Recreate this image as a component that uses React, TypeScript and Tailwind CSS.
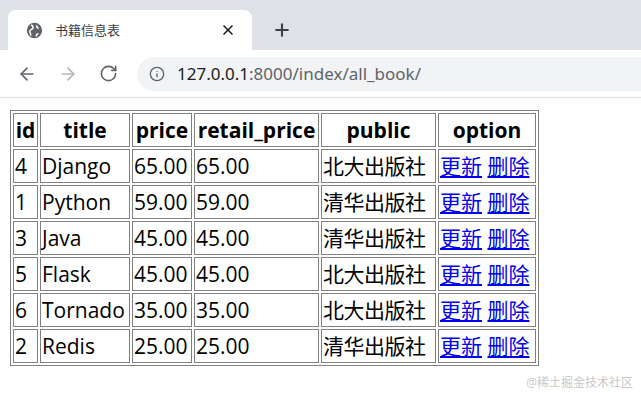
import { ArrowLeft, ArrowRight, RotateCw, Info, X, Plus } from 'lucide-react'

const rows = [
  ['4', 'Django', '65.00', '65.00', '北大出版社'],
  ['1', 'Python', '59.00', '59.00', '清华出版社'],
  ['3', 'Java', '45.00', '45.00', '清华出版社'],
  ['5', 'Flask', '45.00', '45.00', '北大出版社'],
  ['6', 'Tornado', '35.00', '35.00', '北大出版社'],
  ['2', 'Redis', '25.00', '25.00', '清华出版社'],
]

const widths = ['w-[25px]', 'w-[90px]', 'w-[60px]', 'w-[125px]', 'w-[115px]', 'w-[98px]']

export default function App() {
  const cell = 'border border-[#808080] px-[1px] h-[34px] text-[21px] leading-none whitespace-nowrap overflow-hidden'
  return (
    <div className="w-[641px] h-[400px] bg-white relative overflow-hidden" style={{ fontFamily: '"Open Sans", "Noto Sans CJK SC", sans-serif' }}>
      {/* tab strip */}
      <div className="h-[50px] bg-[#dee1e6] flex items-end pl-2">
        <div className="w-[244px] h-[40px] bg-white rounded-t-lg flex items-center pl-[18px] pr-4 gap-[12px]">
          <svg width="17" height="17" viewBox="0 0 20 20">
            <circle cx="10" cy="10" r="9" fill="#5f6368" />
            <path d="M6 3.5c2 1 3 2.5 2 4s-3 1-3.5 3 1.5 3 1 5.5M13 4c-1 1.5 0 3 2 3.5M12 17c0-2 1-3 2.5-3.5" stroke="white" strokeWidth="1.8" fill="none" />
          </svg>
          <span className="text-[13px] text-[#3c4043] flex-1" style={{ fontFamily: '"Noto Sans CJK SC", sans-serif' }}>书籍信息表</span>
          <X size={16} className="text-[#202124]" strokeWidth={2.5} />
        </div>
        <div className="h-[40px] flex items-center pl-5">
          <Plus size={20} className="text-[#3c4043]" strokeWidth={2.5} />
        </div>
      </div>
      {/* toolbar */}
      <div className="h-[48px] flex items-center border-b border-[#dadce0]">
        <div className="flex items-center gap-[21px] pl-[17px] w-[137px]">
          <ArrowLeft size={20} className="text-[#5f6368]" />
          <ArrowRight size={20} className="text-[#b4b6b9]" />
          <RotateCw size={19} className="text-[#5f6368]" />
        </div>
        <div className="flex-1 h-[34px] bg-[#f1f3f4] rounded-l-full flex items-center pl-[12px] gap-[12px]">
          <Info size={16} className="text-[#5f6368]" />
          <span className="text-[17px] text-[#202124]" style={{ fontFamily: '"Noto Sans", sans-serif' }}>
            127.0.0.1<span className="text-[#5f6368]">:8000/index/all_book/</span>
          </span>
        </div>
      </div>
      {/* page */}
      <div className="pt-[12px] pl-[10px]">
        <table className="border border-[#808080] border-separate border-spacing-[2px] text-black">
          <thead>
            <tr>
              {['id', 'title', 'price', 'retail_price', 'public', 'option'].map((h, i) => (
                <th key={h} className={`${cell} ${widths[i]} font-bold text-center`}>{h}</th>
              ))}
            </tr>
          </thead>
          <tbody>
            {rows.map(r => (
              <tr key={r[0]}>
                {r.map((v, i) => (
                  <td key={i} className={`${cell} ${widths[i]} text-left ${i === 4 ? 'text-[21.5px] tracking-[-0.5px]' : ''}`}>{v}</td>
                ))}
                <td className={`${cell} ${widths[5]} text-left`}>
                  <a className="text-[#0000ee] underline">更新</a> <a className="text-[#0000ee] underline">删除</a>
                </td>
              </tr>
            ))}
          </tbody>
        </table>
      </div>
      <div className="absolute right-[8px] bottom-[8px] text-[12px] text-[#c8c8c8]">@稀土掘金技术社区</div>
    </div>
  )
}
